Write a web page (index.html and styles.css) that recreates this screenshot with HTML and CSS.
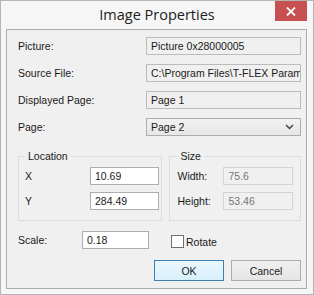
FILE: index.html
```
<!DOCTYPE html>
<html lang="en">
<head>
    <meta charset="UTF-8">
    <title>Image Properties</title>
    <link rel="stylesheet" href="styles.css">
</head>
<body>
    <div class="window">
        <div class="titlebar">
            <span class="title">Image Properties</span>
            <button class="close-btn" aria-label="Close">
                <svg width="10" height="9" viewBox="0 0 10 9"><path d="M1 0.5 L9 8.5 M9 0.5 L1 8.5" stroke="#fff" stroke-width="1.8"/></svg>
            </button>
        </div>

        <div class="client">
            <div class="props">
                <label>Picture:</label>
                <div class="field readonly">Picture 0x28000005</div>

                <label>Source File:</label>
                <div class="field readonly">C:\Program Files\T-FLEX Parametric CAD\</div>

                <label>Displayed Page:</label>
                <div class="field readonly">Page 1</div>

                <label>Page:</label>
                <div class="field combo">
                    <span>Page 2</span>
                    <svg width="9" height="6" viewBox="0 0 9 6"><path d="M1 1 L4.5 4.5 L8 1" fill="none" stroke="#444" stroke-width="1.5"/></svg>
                </div>
            </div>

            <div class="groups">
                <fieldset class="group location">
                    <legend>Location</legend>
                    <div class="group-row">
                        <label>X</label>
                        <div class="field edit">10.69</div>
                    </div>
                    <div class="group-row">
                        <label>Y</label>
                        <div class="field edit">284.49</div>
                    </div>
                </fieldset>
                <fieldset class="group size">
                    <legend>Size</legend>
                    <div class="group-row">
                        <label>Width:</label>
                        <div class="field disabled">75.6</div>
                    </div>
                    <div class="group-row">
                        <label>Height:</label>
                        <div class="field disabled">53.46</div>
                    </div>
                </fieldset>
            </div>

            <div class="scale-row">
                <label>Scale:</label>
                <div class="field edit scale">0.18</div>
                <span class="checkbox"></span>
                <span class="check-label">Rotate</span>
            </div>

            <div class="buttons">
                <button class="btn default">OK</button>
                <button class="btn">Cancel</button>
            </div>
        </div>
    </div>
</body>
</html>
```
FILE: styles.css
```
html, body { margin: 0; padding: 0; }
body { font-family: "Liberation Sans", Arial, sans-serif; font-size: 10.5px; color: #1a1a1a; background: #fff; }

.window { width: 314px; height: 295px; box-sizing: border-box; border: 1px solid #b4b4b4; background: #f6f6f6; display: flex; flex-direction: column; }

.titlebar { height: 28px; position: relative; display: flex; justify-content: center; align-items: center; }
.title { font-family: "Open Sans", "Noto Sans", sans-serif; font-size: 14.5px; color: #222; margin-top: -1px; }
.close-btn { position: absolute; top: 0; right: 6px; width: 32px; height: 20px; border: none; padding: 0; background: #c75050; display: flex; align-items: center; justify-content: center; }

.client { margin: 0 6px 5px 5px; flex: 1; border: 1px solid #acacac; background: #f0f0f0; padding: 7px 5px 0 11px; }

.props { display: grid; grid-template-columns: 128px 155px; row-gap: 9px; align-items: center; }

.field { height: 18px; box-sizing: border-box; border: 1px solid #bcbcbc; padding: 0 4px; line-height: 16px; white-space: nowrap; overflow: hidden; }
.readonly { background: #f0f0f0; }
.combo { background: linear-gradient(#f2f2f2, #e6e6e6); border-color: #acacac; display: flex; justify-content: space-between; align-items: center; padding-right: 6px; }
.edit { background: #fff; border-color: #abadb3; }
.disabled { background: #f0f0f0; border-color: #d4d4d4; color: #777; }

.groups { display: flex; gap: 7px; margin-top: 14px; }
.group { margin: 0; border: 1px solid #dcdcdc; padding: 5px 0 0 6px; height: 71px; box-sizing: border-box; }
.group legend { padding: 0 3px; margin-left: 0; line-height: 12px; }
.location { width: 145px; }
.size { width: 132px; padding-left: 7px; }
.group-row { display: flex; align-items: center; margin-bottom: 7px; }
.location label { width: 65px; }
.location .field { width: 69px; }
.size label { width: 46px; }
.size .field { width: 70px; }

.scale-row { display: flex; align-items: center; margin-top: 10px; }
.scale-row label { width: 64px; }
.scale { width: 67px; }
.checkbox { width: 11px; height: 11px; border: 1px solid #707070; background: #fff; margin-left: 22px; margin-top: 3px; }
.check-label { margin-left: 2px; margin-top: 3px; }

.buttons { display: flex; justify-content: flex-end; gap: 7px; margin-top: 11px; }
.btn { width: 70px; height: 21px; font-family: inherit; font-size: 10.5px; color: #1a1a1a; border: 1px solid #acacac; background: linear-gradient(#f0f0f0, #e5e5e5); padding: 0; }
.btn.default { border-color: #3c7fb1; background: linear-gradient(#eaf6fd, #d9f0fc); }
```
